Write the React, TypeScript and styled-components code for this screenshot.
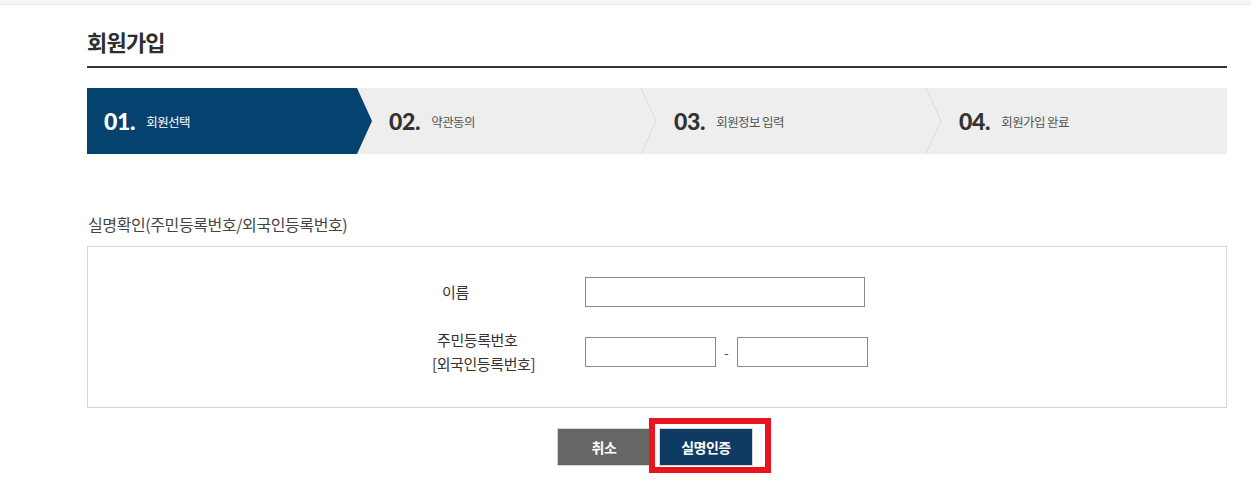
import React from "react";
import styled, { createGlobalStyle } from "styled-components";

const Global = createGlobalStyle`
  html, body { margin: 0; padding: 0; background: #fff; }
  body { font-family: "Noto Sans CJK KR", "Noto Sans", sans-serif; color: #333; }
  * { box-sizing: border-box; }
`;

const TopStrip = styled.div`
  height: 5px;
  background: #f4f5f9;
  border-bottom: 1px solid #ece6e6;
`;

const Container = styled.main`
  width: 1140px;
  margin-left: 87px;
  padding-top: 21px;
`;

const Title = styled.h1`
  margin: 0;
  font-size: 22px;
  line-height: 30px;
  font-weight: 700;
  letter-spacing: -0.8px;
  color: #2e2e2e;
  padding-bottom: 10px;
  border-bottom: 2px solid #333;
`;

const Steps = styled.ol`
  list-style: none;
  margin: 20px 0 0;
  padding: 0;
  display: flex;
  height: 66px;
  background: #eeeeee;
`;

const Step = styled.li<{ $active?: boolean }>`
  position: relative;
  flex: 1;
  display: flex;
  align-items: center;
  gap: 11px;
  padding-left: 17px;
  background: ${(p) => (p.$active ? "#06426f" : "transparent")};
  clip-path: ${(p) =>
    p.$active
      ? "polygon(0 0, calc(100% - 15px) 0, 100% 50%, calc(100% - 15px) 100%, 0 100%)"
      : "none"};
  color: ${(p) => (p.$active ? "#fff" : "#333")};
`;

const StepNum = styled.span`
  font-family: Lato, "Noto Sans", sans-serif;
  font-weight: 900;
  font-size: 23px;
  line-height: 1;
  letter-spacing: -0.3px;
`;

const StepLabel = styled.span<{ $active?: boolean }>`
  font-size: 12.5px;
  letter-spacing: -0.6px;
  color: ${(p) => (p.$active ? "#fff" : "#555")};
  margin-top: 1px;
`;

const Divider = styled.svg`
  position: absolute;
  right: 0;
  top: 0;
  width: 17px;
  height: 66px;
`;

const SectionLabel = styled.h2`
  margin: 58px 0 10px 1px;
  font-size: 16px;
  line-height: 24px;
  font-weight: 400;
  letter-spacing: -0.4px;
  color: #444;
`;

const FormBox = styled.section`
  border: 1px solid #d5d5d5;
  padding: 30px 0 31px 344px;
`;

const FormGrid = styled.div`
  display: grid;
  grid-template-columns: 153px auto;
  row-gap: 21px;
  align-items: center;
`;

const Label = styled.div`
  font-size: 15px;
  line-height: 24px;
  letter-spacing: -0.4px;
  color: #333;
`;

const LabelLine = styled.div<{ $indent: number }>`
  padding-left: ${(p) => p.$indent}px;
`;

const Field = styled.div`
  display: flex;
  align-items: center;
  gap: 7px;
`;

const Input = styled.input<{ $w: number }>`
  width: ${(p) => p.$w}px;
  height: 30px;
  border: 1px solid #8a8a8a;
  padding: 0 6px;
  font-size: 14px;
  outline: none;
`;

const Dash = styled.span`
  width: 7px;
  text-align: center;
  font-size: 14px;
  color: #555;
`;

const Buttons = styled.div`
  display: flex;
  align-items: flex-start;
  justify-content: center;
  gap: 8px;
  margin-top: 20px;
  padding-right: 4px;
  height: 60px;
`;

const Button = styled.button<{ $primary?: boolean }>`
  display: block;
  width: 94px;
  height: 38px;
  margin: 0;
  border: 1px solid #d6d6d6;
  background: ${(p) => (p.$primary ? "#0e3a63" : "#666666")};
  color: #fff;
  font-family: "Noto Sans CJK KR", sans-serif;
  font-size: 14px;
  font-weight: 700;
  letter-spacing: -0.5px;
  cursor: pointer;
`;

const Highlight = styled.div`
  position: relative;
  width: 94px;
  height: 38px;
`;

const RedBox = styled.span`
  position: absolute;
  left: -10px;
  top: -10px;
  width: 122px;
  height: 55px;
  border: 6px solid #e8141e;
  pointer-events: none;
`;

const steps = [
  { num: "01.", label: "회원선택" },
  { num: "02.", label: "약관동의" },
  { num: "03.", label: "회원정보 입력" },
  { num: "04.", label: "회원가입 완료" },
];

export default function App() {
  return (
    <>
      <Global />
      <TopStrip />
      <Container>
        <Title>회원가입</Title>
        <Steps>
          {steps.map((s, i) => (
            <Step key={s.num} $active={i === 0}>
              <StepNum>{s.num}</StepNum>
              <StepLabel $active={i === 0}>{s.label}</StepLabel>
              {i > 0 && i < steps.length - 1 && (
                <Divider viewBox="0 0 17 66" preserveAspectRatio="none">
                  <polyline points="1,0 16,33 1,66" fill="none" stroke="#dadada" strokeWidth="1" />
                </Divider>
              )}
            </Step>
          ))}
        </Steps>
        <SectionLabel>실명확인(주민등록번호/외국인등록번호)</SectionLabel>
        <FormBox>
          <FormGrid>
            <Label>
              <LabelLine $indent={10}>이름</LabelLine>
            </Label>
            <Field>
              <Input $w={280} type="text" />
            </Field>
            <Label>
              <LabelLine $indent={5}>주민등록번호</LabelLine>
              <LabelLine $indent={0}>[외국인등록번호]</LabelLine>
            </Label>
            <Field>
              <Input $w={131} type="text" />
              <Dash>-</Dash>
              <Input $w={131} type="password" />
            </Field>
          </FormGrid>
        </FormBox>
        <Buttons>
          <Button>취소</Button>
          <Highlight>
            <Button $primary>실명인증</Button>
            <RedBox />
          </Highlight>
        </Buttons>
      </Container>
    </>
  );
}
